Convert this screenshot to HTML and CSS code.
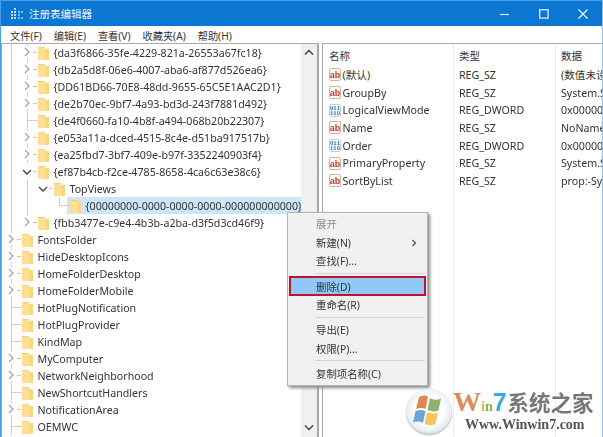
FILE: index.html
```html
<!DOCTYPE html>
<html lang="zh">
<head>
<meta charset="utf-8">
<title>注册表编辑器</title>
<link rel="stylesheet" href="styles.css">
</head>
<body>
<svg class="defs" width="0" height="0" aria-hidden="true">
  <defs>
    <symbol id="folder" viewBox="0 0 12 15">
      <path d="M0 1.500h7.500l1 1.500H12v12H0z" fill="#fcdf92"/>
      <path d="M8.500 3H12v12H8.500z" fill="#f8d67e"/>
      <path d="M0 1.500h7.500" stroke="#f3cd70" stroke-width="1" fill="none"/>
    </symbol>
    <symbol id="chev-r" viewBox="0 0 8 10"><path d="M2 1l4 4-4 4" fill="none" stroke="#a6a6a6" stroke-width="1.300"/></symbol>
    <symbol id="chev-d" viewBox="0 0 10 8"><path d="M1 2l4 4 4-4" fill="none" stroke="#444" stroke-width="1.400"/></symbol>
  </defs>
</svg>

<div class="window">
  <header class="titlebar">
    <svg class="app-icon" width="13" height="13" viewBox="0 0 13 13">
      <g fill="#bfe0f5"><rect x="0" y="4" width="2" height="2"/><rect x="3" y="1" width="2" height="2"/><rect x="3" y="4" width="2" height="2"/><rect x="0" y="7" width="2" height="2"/><rect x="3" y="7" width="2" height="2"/><rect x="0" y="10" width="2" height="2"/><rect x="3" y="10" width="2" height="2"/></g>
      <g fill="#7fc0ea"><rect x="7" y="10" width="2" height="2"/><rect x="10" y="10" width="2" height="2"/><rect x="7" y="7" width="2" height="2"/><rect x="10" y="4" width="2" height="2"/><rect x="7" y="4" width="2" height="2"/></g>
    </svg>
    <span class="title-text">注册表编辑器</span>
    <div class="win-controls">
      <svg width="10" height="10" viewBox="0 0 10 10"><path d="M0 5.500h9" stroke="#d6ecfa" stroke-width="1.200"/></svg>
      <svg width="10" height="10" viewBox="0 0 10 10"><rect x="0.700" y="0.700" width="8.400" height="8.400" fill="none" stroke="#e8f4fc" stroke-width="1.200"/></svg>
      <svg width="10" height="10" viewBox="0 0 10 10"><path d="M0.500 0.500l9 9M9.500 0.500l-9 9" stroke="#f2f9fd" stroke-width="1.200"/></svg>
    </div>
  </header>

  <nav class="menubar">
    <span>文件(F)</span><span>编辑(E)</span><span>查看(V)</span><span>收藏夹(A)</span><span>帮助(H)</span>
  </nav>

  <main class="panes">
    <section class="tree-pane">
      <div class="tree" id="tree"></div>
      <div class="scrollbar">
        <svg width="10" height="7" viewBox="0 0 10 7"><path d="M1 5.500l4-4 4 4" fill="none" stroke="#444" stroke-width="1.500"/></svg>
        <svg width="10" height="7" viewBox="0 0 10 7"><path d="M1 1.500l4 4 4-4" fill="none" stroke="#444" stroke-width="1.500"/></svg>
      </div>
    </section>
    <section class="list-pane">
      <div class="list-head">
        <span class="col-name">名称</span><span class="col-type">类型</span><span class="col-data">数据</span>
      </div>
      <div id="list"></div>
    </section>
  </main>

  <div class="context-menu">
    <div class="mi disabled">展开</div>
    <div class="mi">新建(N)<svg class="sub" width="6" height="8" viewBox="0 0 6 8"><path d="M1.500 1l3 3-3 3" fill="none" stroke="#444" stroke-width="1.100"/></svg></div>
    <div class="mi">查找(F)...</div>
    <div class="sep"></div>
    <div class="mi active">删除(D)</div>
    <div class="mi">重命名(R)</div>
    <div class="sep"></div>
    <div class="mi">导出(E)</div>
    <div class="mi">权限(P)...</div>
    <div class="sep"></div>
    <div class="mi">复制项名称(C)</div>
  </div>

  <div class="watermark">
    <svg class="orb" width="48" height="48" viewBox="0 0 48 48">
      <defs>
        <radialGradient id="orbfill" cx="50%" cy="45%" r="55%">
          <stop offset="0.550" stop-color="#ffffff"/>
          <stop offset="0.850" stop-color="#e9eef2"/>
          <stop offset="1" stop-color="#b9c4cc"/>
        </radialGradient>
      </defs>
      <circle cx="24" cy="24" r="23.500" fill="url(#orbfill)"/>
      <path d="M14 9c4-2 7-2 9 0l-2.500 12c-3-1.500-6-1.500-9.500 0z" fill="#dd8a52"/>
      <path d="M25 10c3 2 7 2.500 11 .5l-2.500 12c-4 1.500-8 1-11-.5z" fill="#8fb169"/>
      <path d="M10.500 23c3.500-1.500 7-1.500 10 0L18 35c-3-2-6.500-2-10-.5z" fill="#6ba6d8"/>
      <path d="M22 24c3 1.500 7 2 11 .5L30.500 36c-4 2-8 1.500-11-.5z" fill="#f1c75a"/>
    </svg>
    <div class="brand">
      <div class="brand-top"><span class="b-w">W</span><span class="b-i">i</span><span class="b-n">n</span><span class="b-7">7</span><span class="b-cn">系统之家</span></div>
      <div class="brand-url">Www.Winwin7.com</div>
    </div>
  </div>
</div>
<script src="app.js"></script>
</body>
</html>
```

FILE: app.js
```js
const use = (id, w, h, cls) =>
  `<svg class="${cls}" width="${w}" height="${h}"><use href="#${id}"/></svg>`;

// [label, depth, expander]; r = collapsed, e = collapsed last child, d = open, n = none, l = elbow
const rows = [
  ["{da3f6866-35fe-4229-821a-26553a67fc18}", 1, "r"],
  ["{db2a5d8f-06e6-4007-aba6-af877d526ea6}", 1, "r"],
  ["{DD61BD66-70E8-48dd-9655-65C5E1AAC2D1}", 1, "r"],
  ["{de2b70ec-9bf7-4a93-bd3d-243f7881d492}", 1, "r"],
  ["{de4f0660-fa10-4b8f-a494-068b20b22307}", 1, "n"],
  ["{e053a11a-dced-4515-8c4e-d51ba917517b}", 1, "r"],
  ["{ea25fbd7-3bf7-409e-b97f-3352240903f4}", 1, "r"],
  ["{ef87b4cb-f2ce-4785-8658-4ca6c63e38c6}", 1, "d"],
  ["TopViews", 2, "d"],
  ["{00000000-0000-0000-0000-000000000000}", 3, "l"],
  ["{fbb3477e-c9e4-4b3b-a2ba-d3f5d3cd46f9}", 1, "e"],
  ["FontsFolder", 0, "r"],
  ["HideDesktopIcons", 0, "r"],
  ["HomeFolderDesktop", 0, "r"],
  ["HomeFolderMobile", 0, "r"],
  ["HotPlugNotification", 0, "n"],
  ["HotPlugProvider", 0, "n"],
  ["KindMap", 0, "n"],
  ["MyComputer", 0, "r"],
  ["NetworkNeighborhood", 0, "r"],
  ["NewShortcutHandlers", 0, "n"],
  ["NotificationArea", 0, "r"],
  ["OEMWC", 0, "n"]
];

document.getElementById("tree").innerHTML = rows.map(([label, depth, kind]) => {
  let guides = "";
  for (let i = 0; i < depth; i++) {
    const draw = i === 0 || (i === 1 && depth >= 2);
    guides += `<span class="guide${draw ? " on" : ""}"></span>`;
  }
  let exp = "";
  if (kind === "r" || kind === "e") exp = `<span class="vert${kind === "e" ? " half" : ""}"></span>` + use("chev-r", 8, 10, "chev") + `<span class="dash"></span>`;
  if (kind === "d") exp = use("chev-d", 10, 8, "chev open") + `<span class="dash"></span>`;
  if (kind === "n") exp = `<span class="vert"></span><span class="elbow"></span>`;
  if (kind === "l") exp = `<span class="vert half"></span><span class="elbow"></span>`;
  const selected = kind === "l";
  const body = `${use("folder", 11, 14, "folder")}<span class="label">${label}</span>`;
  return `<div class="row"><div class="guides">${guides}</div><span class="exp">${exp}</span>` +
    (selected ? `<span class="selected">${body}</span>` : body) + `</div>`;
}).join("");

const ab = `<svg class="vicon" width="12" height="13" viewBox="0 0 12 13"><rect x="0.500" y="0.500" width="11" height="12" rx="1.500" fill="#fff" stroke="#d2b49a"/><text x="6" y="9.500" text-anchor="middle" class="ab">ab</text></svg>`;
const bin = `<svg class="vicon" width="12" height="13" viewBox="0 0 12 13"><rect x="0.500" y="0.500" width="11" height="12" rx="1.500" fill="#fff" stroke="#c3cfdc"/><text x="6" y="5.700" text-anchor="middle" class="bin">011</text><text x="6" y="11.200" text-anchor="middle" class="bin">110</text></svg>`;
const values = [
  ["(默认)", "REG_SZ", "(数值未设置)", ab],
  ["GroupBy", "REG_SZ", "System.Size", ab],
  ["LogicalViewMode", "REG_DWORD", "0x00000001", bin],
  ["Name", "REG_SZ", "NoName", ab],
  ["Order", "REG_DWORD", "0x00000000", bin],
  ["PrimaryProperty", "REG_SZ", "System.Size", ab],
  ["SortByList", "REG_SZ", "prop:-System", ab]
];
document.getElementById("list").innerHTML = values.map(([n, t, d, ic]) =>
  `<div class="vrow"><span class="col-name">${ic}<span>${n}</span></span><span class="col-type">${t}</span><span class="col-data">${d}</span></div>`
).join("");
```

FILE: styles.css
```css
* { box-sizing: border-box; }
html, body { margin: 0; padding: 0; height: 100%; overflow: hidden; background: #fff; }
body {
  font-family: "Noto Sans", "Noto Sans CJK SC", sans-serif;
  font-size: 10.650px;
  color: #333;
}
.defs { position: absolute; }

.window {
  position: relative;
  width: 603px;
  height: 437px;
  border-left: 1px solid #4a9fe0;
  border-right: 1px solid #8cc0ea;
  border-top: 1px solid #4a9fe0;
  display: flex;
  flex-direction: column;
  overflow: hidden;
  filter: blur(0.3px);
}

.titlebar {
  flex: none;
  height: 25px;
  background: #0a78d2;
  display: flex;
  align-items: center;
  padding-left: 10px;
  color: #e8f4fc;
}
.app-icon { flex: none; }
.title-text {
  margin-left: 5px;
  font-family: "Noto Sans CJK SC", sans-serif;
  font-size: 10.500px;
}
.win-controls {
  margin-left: auto;
  display: flex;
  gap: 29px;
  padding-right: 14px;
}

.menubar {
  flex: none;
  height: 17px;
  display: flex;
  align-items: center;
  gap: 12px;
  padding: 1px 0 0 9px;
  font-size: 10.200px;
  background: #fff;
}

.panes {
  flex: 1;
  min-height: 0;
  display: flex;
}

.tree-pane {
  width: 318px;
  flex: none;
  display: flex;
  border-top: 1px solid #a8a8a8;
  border-left: 1px solid #a8a8a8;
  border-right: 2px solid #a8a8a8;
}
.tree {
  flex: 1;
  min-width: 0;
  padding-left: 4px;
  overflow: hidden;
}
.scrollbar {
  width: 16px;
  flex: none;
  background: #f0f0f0;
  display: flex;
  flex-direction: column;
  justify-content: space-between;
  align-items: center;
  padding: 5px 0 6px;
}

.row {
  height: 17px;
  display: flex;
  align-items: center;
  white-space: nowrap;
}
.guides { display: flex; height: 100%; flex: none; }
.guide { width: 16px; position: relative; }
.guide.on::before {
  content: "";
  position: absolute;
  left: 5px;
  top: 0;
  bottom: 0;
  width: 1px;
  background: #cfcfcf;
}
.exp {
  width: 16px;
  height: 100%;
  flex: none;
  position: relative;
}
.vert {
  position: absolute;
  left: 5px;
  top: 0;
  bottom: 0;
  width: 1px;
  background: #cfcfcf;
}
.vert.half { bottom: 8px; }
.elbow {
  position: absolute;
  left: 5px;
  top: 8px;
  width: 11px;
  height: 1px;
  background: #cfcfcf;
}
.dash {
  position: absolute;
  left: 11px;
  top: 8px;
  width: 4px;
  height: 1px;
  background: #c4c4c4;
}
.chev {
  position: absolute;
  left: 1px;
  top: 3px;
  background: #fff;
  box-shadow: 0 0 0 1px #fff;
}
.chev.open { left: 0; top: 5px; }
.folder { flex: none; }
.label { margin-left: 4.500px; }
.selected {
  display: flex;
  align-items: center;
  flex: 1;
  height: 100%;
  margin-left: -3px;
  padding-left: 3px;
  background: #cde6f7;
}

.list-pane {
  flex: 1;
  min-width: 0;
  margin-left: 3px;
  border-top: 1px solid #a8a8a8;
  border-left: 1px solid #a8a8a8;
  position: relative;
  background:
    linear-gradient(#e6eef5, #e6eef5) 130px 0 / 1px 100% no-repeat,
    linear-gradient(#e6eef5, #e6eef5) 232px 0 / 1px 100% no-repeat,
    #fff;
}
.list-head, .vrow {
  display: flex;
  align-items: center;
  white-space: nowrap;
}
.list-head { height: 22px; font-size: 10.500px; }
.vrow { height: 17.700px; }
.col-name { width: 136px; padding-left: 6px; flex: none; display: flex; align-items: center; }
.col-type { width: 102px; flex: none; }
.col-data { flex: 1; overflow: hidden; }
.vicon { flex: none; margin-right: 1.500px; }
.ab { font: bold 9px "Liberation Sans", sans-serif; fill: #c8391f; }
.bin { font: bold 5.500px "Liberation Mono", monospace; fill: #2f6fb5; }

.context-menu {
  position: absolute;
  left: 286px;
  top: 211px;
  width: 141px;
  padding: 1.500px 2px 2px;
  background: #f1f1f1;
  border: 1px solid #b4b4b4;
  box-shadow: 2px 2px 3px #8a8a8a;
  font-size: 10.400px;
  z-index: 5;
}
.mi {
  height: 18.500px;
  display: flex;
  align-items: center;
  padding-left: 26px;
  position: relative;
}
.mi.disabled { color: #8c8c8c; }
.sub { position: absolute; right: 8px; top: 6px; }
.mi.active {
  background: #90c8f6;
  outline: 2px solid #c5112e;
  outline-offset: -1px;
}
.sep {
  height: 6.800px;
  margin-left: 25px;
  background: linear-gradient(#d4d4d4, #d4d4d4) center / 100% 1px no-repeat;
}

.watermark {
  position: absolute;
  left: 404px;
  top: 387px;
  display: flex;
  z-index: 6;
}
.orb { flex: none; }
.brand { margin-left: 0; white-space: nowrap; }
.brand-top {
  height: 29px;
  display: flex;
  align-items: baseline;
  font-family: "Liberation Serif", serif;
  font-weight: bold;
  line-height: 28px;
}
.b-w { font-size: 28px; color: #e08a5e; }
.b-i { font-size: 14px; color: #e3b84a; }
.b-n { font-size: 14px; color: #8cb04e; }
.b-7 { font-family: "Liberation Sans", sans-serif; font-size: 25px; color: #3fa9dc; }
.b-cn {
  font-family: "Noto Sans CJK SC", sans-serif;
  font-size: 21.500px;
  color: #777;
  margin-left: 1px;
}
.brand-url {
  font-family: "Liberation Serif", serif;
  font-weight: bold;
  font-size: 14px;
  color: #555;
  margin-left: 12px;
  line-height: 15px;
}
```
